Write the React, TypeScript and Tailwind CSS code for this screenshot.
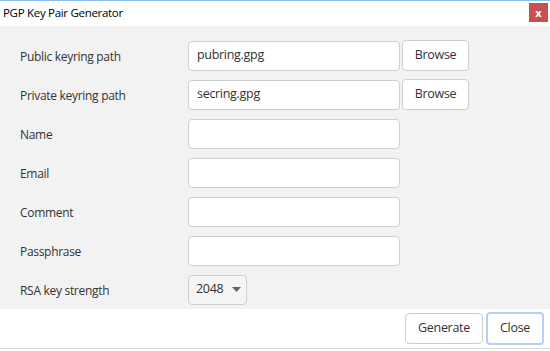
import React from "react";

const font = { fontFamily: '"Segoe UI", "Open Sans", "Noto Sans", sans-serif' };

function Row({ label, children }: { label: string; children: React.ReactNode }) {
  return (
    <div className="flex h-[31px] items-center">
      <div className="w-[168px] shrink-0 pt-[2px] text-[12px] tracking-[-0.3px] text-[#333]">{label}</div>
      {children}
    </div>
  );
}

function Input({ value = "" }: { value?: string }) {
  return (
    <div className="flex h-[30px] w-[212px] items-center rounded-[4px] border border-[#cfcfcf] bg-white px-[8px] text-[12.5px] tracking-[-0.3px] text-[#333]">
      {value}
    </div>
  );
}

function Browse() {
  return (
    <div className="ml-[2px] flex h-[31px] w-[67px] items-center justify-center rounded-[4px] border border-[#cfcfcf] bg-white text-[12.5px] tracking-[-0.3px] text-[#333]">
      Browse
    </div>
  );
}

export default function App() {
  return (
    <div className="flex h-[351px] w-[550px] flex-col bg-white" style={font}>
      <div className="h-[1px] bg-[#8cbff0]" />
      <div className="flex h-[25px] items-start justify-between bg-white">
        <div className="pl-[3px] pt-[3px] text-[11.5px] tracking-[-0.3px] text-black">PGP Key Pair Generator</div>
        <div className="mr-[2px] mt-[2px] flex h-[19px] w-[19px] items-center justify-center bg-[#c75050] text-[11px] font-bold leading-none text-white">
          x
        </div>
      </div>
      <div className="flex h-[283px] flex-col gap-[8px] bg-[#f2f2f2] pl-[20px] pt-[14px]">
        <Row label="Public keyring path">
          <Input value="pubring.gpg" />
          <Browse />
        </Row>
        <Row label="Private keyring path">
          <Input value="secring.gpg" />
          <Browse />
        </Row>
        <Row label="Name">
          <Input />
        </Row>
        <Row label="Email">
          <Input />
        </Row>
        <Row label="Comment">
          <Input />
        </Row>
        <Row label="Passphrase">
          <Input />
        </Row>
        <Row label="RSA key strength">
          <div className="flex h-[30px] w-[59px] items-center rounded-[4px] border border-[#cfcfcf] bg-[#f5f5f5] pl-[7px] text-[12.5px] tracking-[-0.3px] text-[#333]">
            2048
            <svg width="9" height="5" viewBox="0 0 9 5" className="ml-[9px]">
              <path d="M0 0 L9 0 L4.5 5 Z" fill="#666" />
            </svg>
          </div>
        </Row>
      </div>
      <div className="flex h-[40px] items-center justify-end gap-[3px] border-b border-[#dcdcdc] bg-white pr-[6px]">
        <div className="flex h-[31px] w-[78px] items-center justify-center rounded-[4px] border border-[#cfcfcf] bg-white text-[12.5px] tracking-[-0.3px] text-[#333]">
          Generate
        </div>
        <div className="flex h-[33px] w-[58px] items-center justify-center rounded-[4px] border-2 border-[#b3d1f2] bg-white text-[12.5px] tracking-[-0.3px] text-[#333]">
          Close
        </div>
      </div>
    </div>
  );
}
